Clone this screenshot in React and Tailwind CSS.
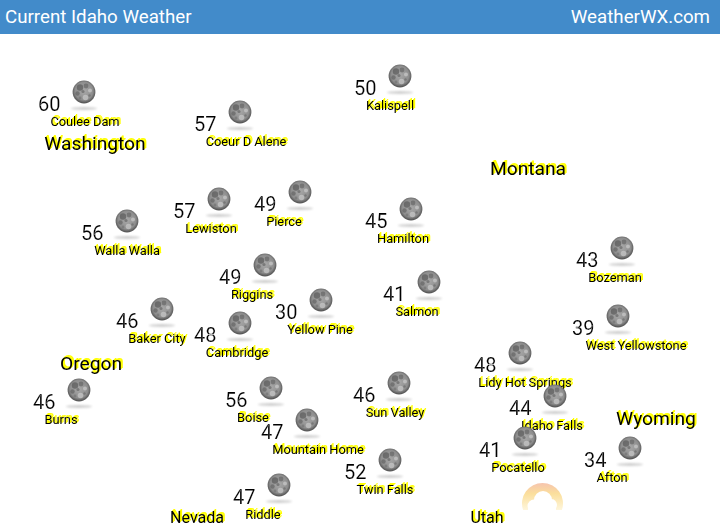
const stations = [
  { temp: 60, name: "Coulee Dam", x: 84, y: 92, labelX: 85 },
  { temp: 57, name: "Coeur D Alene", x: 240, y: 112, labelX: 246 },
  { temp: 50, name: "Kalispell", x: 400, y: 76, labelX: 390 },
  { temp: 57, name: "Lewiston", x: 219, y: 199, labelX: 211 },
  { temp: 49, name: "Pierce", x: 300, y: 192, labelX: 284 },
  { temp: 56, name: "Walla Walla", x: 127, y: 221, labelX: 127 },
  { temp: 45, name: "Hamilton", x: 411, y: 209, labelX: 403 },
  { temp: 49, name: "Riggins", x: 265, y: 265, labelX: 252 },
  { temp: 43, name: "Bozeman", x: 622, y: 248, labelX: 615 },
  { temp: 41, name: "Salmon", x: 429, y: 282, labelX: 417 },
  { temp: 30, name: "Yellow Pine", x: 321, y: 300, labelX: 320 },
  { temp: 46, name: "Baker City", x: 162, y: 309, labelX: 157 },
  { temp: 48, name: "Cambridge", x: 240, y: 323, labelX: 237 },
  { temp: 39, name: "West Yellowstone", x: 618, y: 316, labelX: 636 },
  { temp: 48, name: "Lidy Hot Springs", x: 520, y: 353, labelX: 525 },
  { temp: 46, name: "Burns", x: 79, y: 390, labelX: 61 },
  { temp: 56, name: "Boise", x: 271, y: 388, labelX: 253 },
  { temp: 46, name: "Sun Valley", x: 399, y: 383, labelX: 395 },
  { temp: 44, name: "Idaho Falls", x: 555, y: 396, labelX: 552 },
  { temp: 47, name: "Mountain Home", x: 307, y: 420, labelX: 318 },
  { temp: 41, name: "Pocatello", x: 525, y: 438, labelX: 518 },
  { temp: 34, name: "Afton", x: 630, y: 448, labelX: 612 },
  { temp: 52, name: "Twin Falls", x: 390, y: 460, labelX: 385 },
  { temp: 47, name: "Riddle", x: 279, y: 485, labelX: 263 },
];

const states = [
  { name: "Washington", x: 95, y: 144, size: "text-[19.2px]" },
  { name: "Montana", x: 528, y: 169, size: "text-[19.2px]" },
  { name: "Oregon", x: 91, y: 364, size: "text-[19.2px]" },
  { name: "Wyoming", x: 656, y: 419, size: "text-[19.2px]" },
  { name: "Nevada", x: 197, y: 518, size: "text-[16px]" },
  { name: "Utah", x: 487, y: 518, size: "text-[16px]" },
];

function Moon() {
  return (
    <svg width="24" height="24" viewBox="0 0 24 24" className="absolute left-[-12px] top-[-12px]">
      <defs>
        <radialGradient id="moonBody" cx="50%" cy="46%" r="52%">
          <stop offset="0%" stopColor="#a8a8a8" />
          <stop offset="75%" stopColor="#8e8e8e" />
          <stop offset="100%" stopColor="#555555" />
        </radialGradient>
      </defs>
      <circle cx="12" cy="12" r="11.4" fill="url(#moonBody)" />
      <circle cx="8" cy="7.5" r="3.2" fill="#5a5a5a" opacity="0.7" />
      <circle cx="14" cy="6" r="2.4" fill="#626262" opacity="0.65" />
      <circle cx="5.5" cy="13.5" r="2.2" fill="#5e5e5e" opacity="0.6" />
      <circle cx="11" cy="11.5" r="1.6" fill="#666666" opacity="0.7" />
      <circle cx="18" cy="10.5" r="2" fill="#cccccc" opacity="0.7" />
      <circle cx="13.5" cy="17.5" r="2.8" fill="#c6c6c6" opacity="0.75" />
      <circle cx="8" cy="18" r="1.4" fill="#707070" opacity="0.6" />
      <circle cx="17.5" cy="15.5" r="1.2" fill="#666666" opacity="0.6" />
    </svg>
  );
}

function Station({ temp, name, x, y, labelX }) {
  return (
    <>
      <div className="absolute" style={{ left: x, top: y }}>
        <Moon />
        <div className="absolute left-[-13px] top-[15px] h-[3px] w-[26px] rounded-[50%] bg-[#cfcfcf] blur-[1px]" />
      </div>
      <div
        className="absolute text-[20px] leading-[20px] text-black will-change-transform [-webkit-text-stroke:0.15px_white]"
        style={{ left: x - 46, top: y + 2 }}
      >
        {temp}
      </div>
      <div className="absolute flex w-0 justify-center" style={{ left: labelX, top: y + 23 }}>
        <span className="whitespace-nowrap text-[12.8px] leading-[14px] text-black [text-shadow:1px_-1px_0_#ffff00,2px_-2px_0_#ffff00]">
          {name}
        </span>
      </div>
    </>
  );
}

export default function App() {
  return (
    <div className="flex h-[530px] w-[720px] flex-col overflow-hidden bg-white font-['Roboto',sans-serif]">
      <header className="flex h-[34px] items-center justify-between bg-[#428bca] pl-[5px] pr-[10px] text-[18.72px] text-white">
        <span>Current Idaho Weather</span>
        <span>WeatherWX.com</span>
      </header>
      <main className="relative flex-1">
        <div className="absolute inset-x-0 top-[-34px] h-[530px]">
          {stations.map((s) => (
            <Station key={s.name} {...s} />
          ))}
          {states.map((s) => (
            <div
              key={s.name}
              className="absolute flex w-0 justify-center"
              style={{ left: s.x, top: s.y - 11 }}
            >
              <span className={`${s.size} leading-[22px] text-black [text-shadow:1px_-1px_0_#ffff00,2px_-2px_0_#ffff00]`}>
                {s.name}
              </span>
            </div>
          ))}
          {/* faded sun behind cloud, bottom of the map */}
          <svg width="44" height="30" viewBox="0 0 44 30" className="absolute left-[521px] top-[482px]">
            <defs>
              <linearGradient id="sunArc" x1="0" y1="0" x2="0" y2="1">
                <stop offset="0%" stopColor="#f6c4ae" />
                <stop offset="40%" stopColor="#fbdf9c" />
                <stop offset="100%" stopColor="#fef6dc" />
              </linearGradient>
            </defs>
            <path d="M2.1 28a20.5 20.5 0 1 1 38.8 0z" fill="url(#sunArc)" />
            <g fill="#fff">
              <circle cx="22" cy="18" r="9" />
              <circle cx="13" cy="24" r="6.5" />
              <circle cx="30" cy="23" r="6" />
              <rect x="7" y="24" width="28" height="6" />
            </g>
          </svg>
        </div>
      </main>
    </div>
  );
}
